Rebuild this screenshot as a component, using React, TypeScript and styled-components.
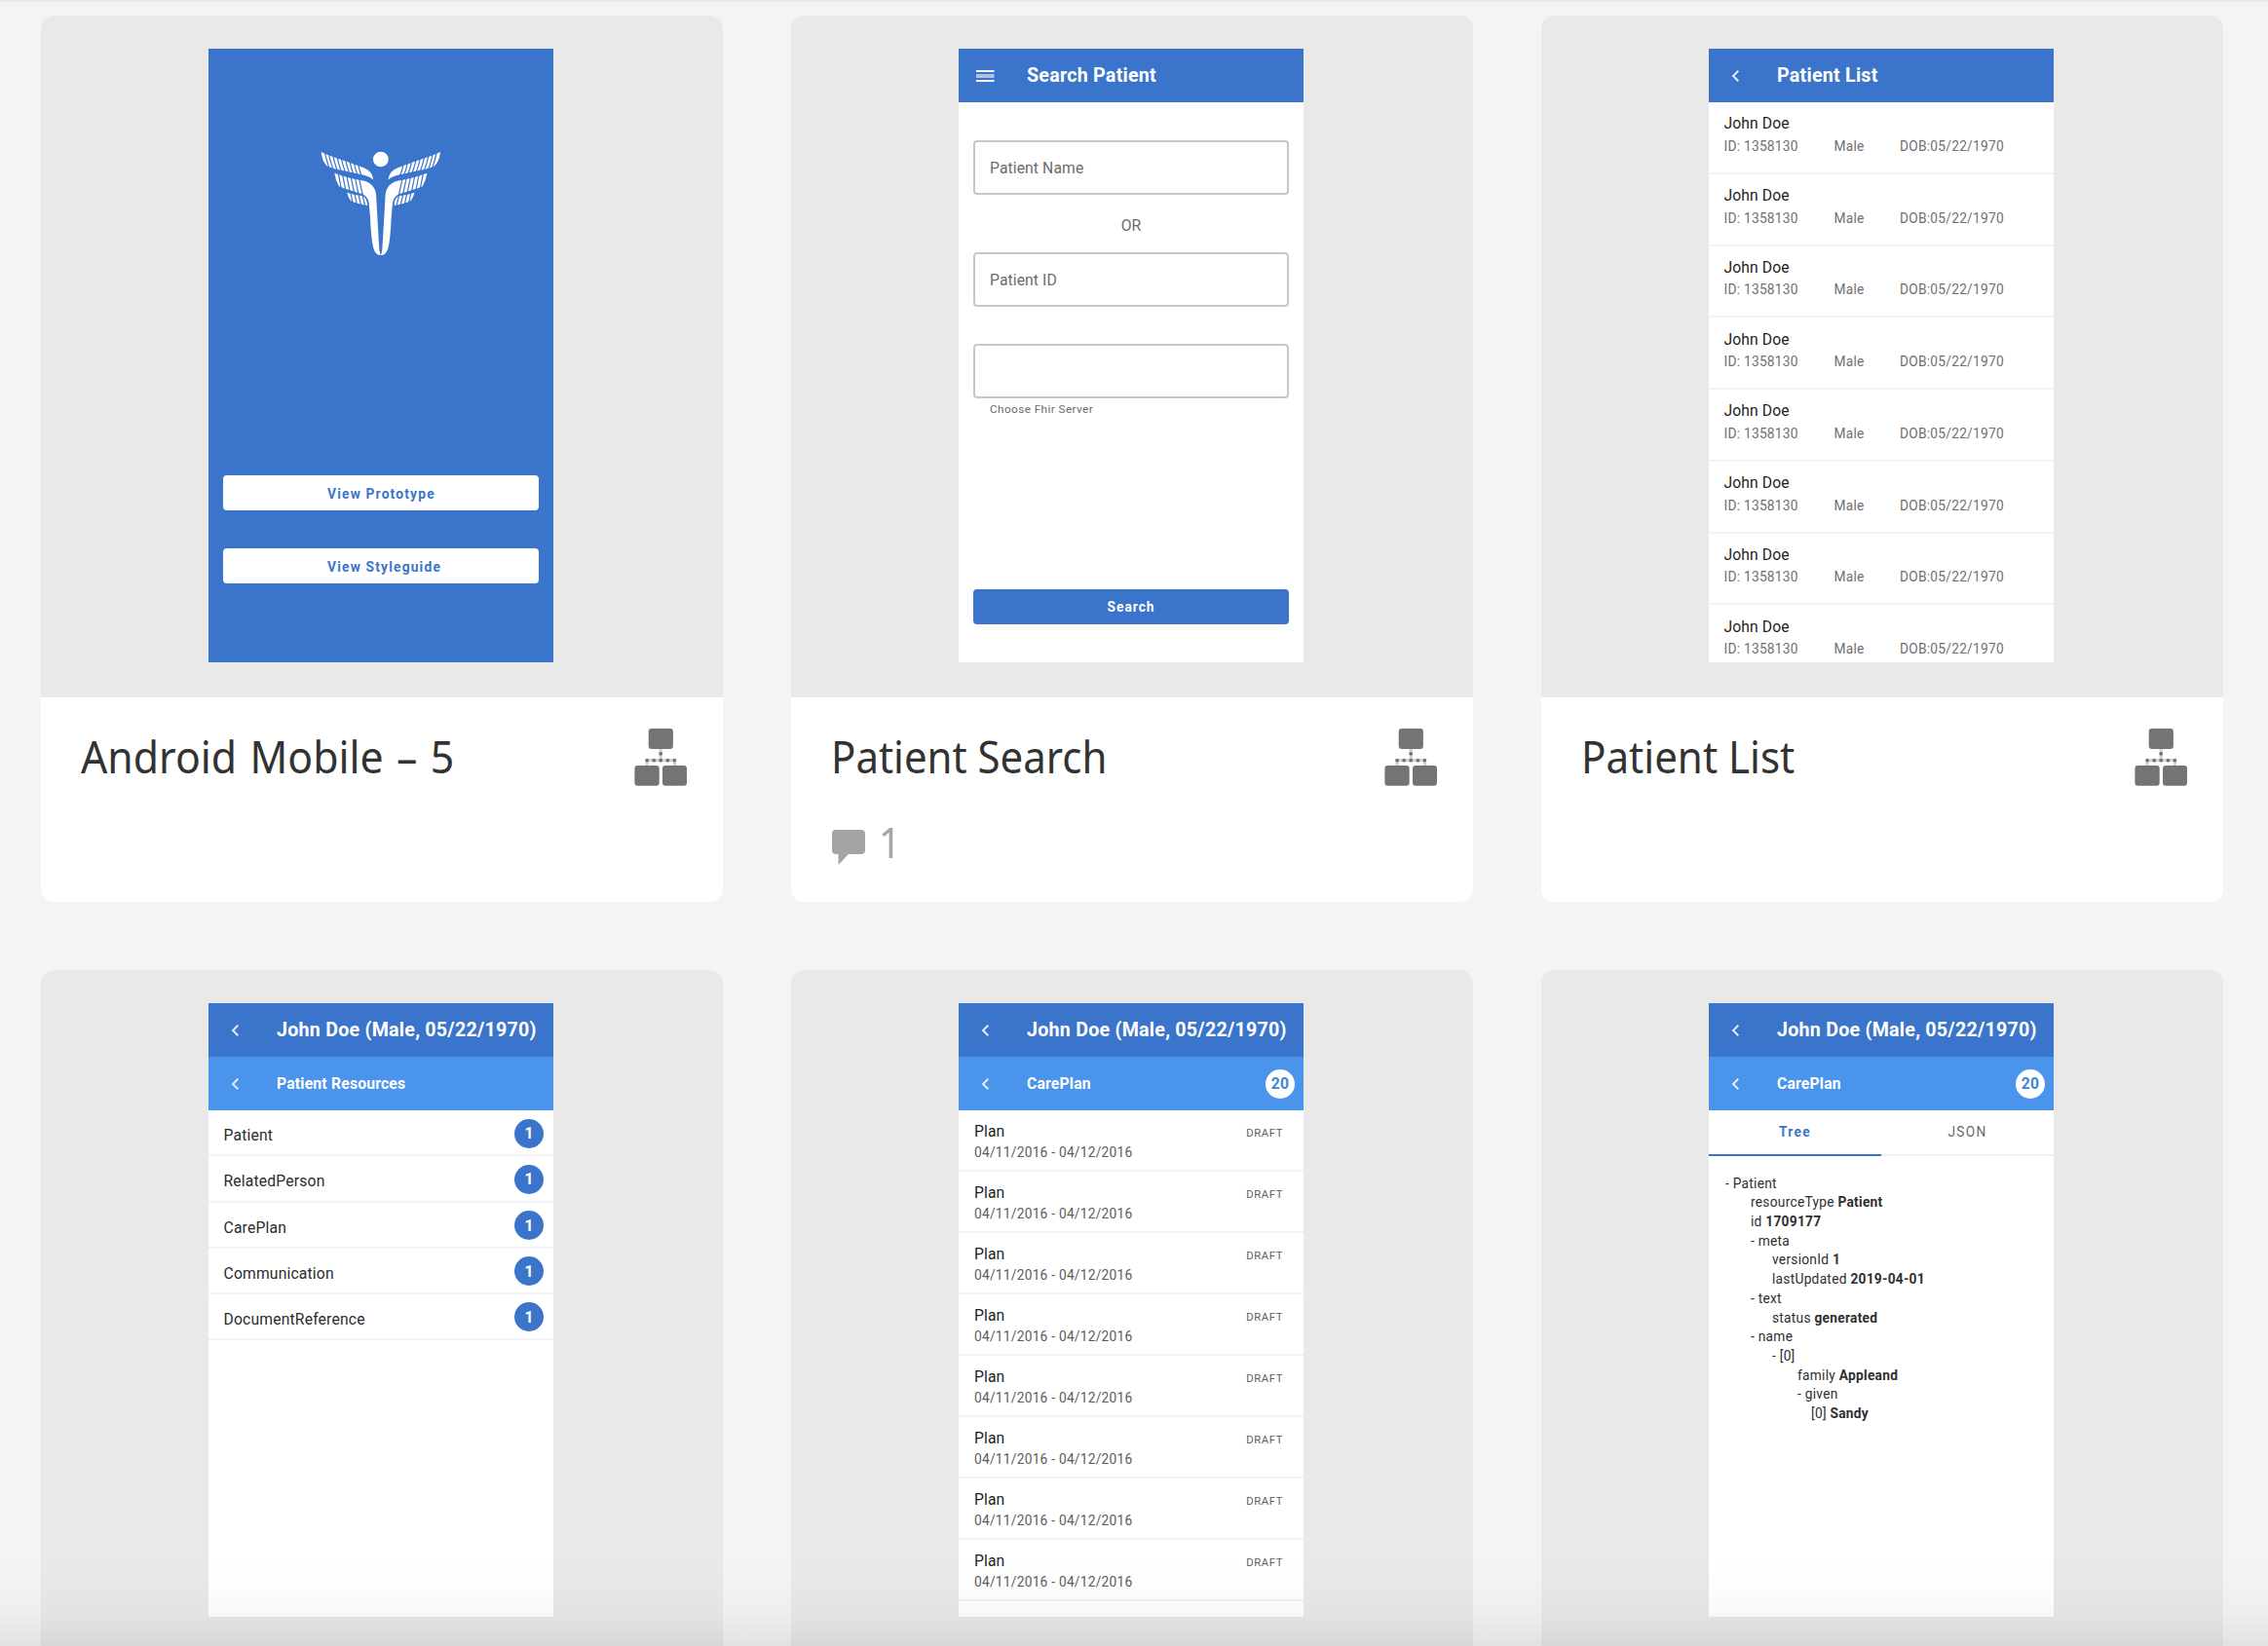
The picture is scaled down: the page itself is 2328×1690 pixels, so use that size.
import React from "react";
import styled, { createGlobalStyle, css } from "styled-components";

const BLUE = "#3a75cb";
const SKY = "#4a95eb";

const GlobalStyle = createGlobalStyle`
  *, *::before, *::after { box-sizing: border-box; }
  html, body { margin: 0; padding: 0; background: #f4f4f4; }
  body { font-family: Roboto, "Liberation Sans", sans-serif; }
`;

const Page = styled.main`
  position: relative;
  width: 2328px;
  height: 1690px;
  overflow: hidden;
  background: #f4f4f4;
  border-top: 2px solid #e8e8e8;
  padding: 14px 0 0 42px;
`;

const BottomFade = styled.div`
  position: absolute;
  left: 0;
  right: 0;
  bottom: 0;
  height: 100px;
  pointer-events: none;
  background: linear-gradient(
    to bottom,
    rgba(0, 0, 0, 0) 0%,
    rgba(0, 0, 0, 0.008) 35%,
    rgba(0, 0, 0, 0.028) 68%,
    rgba(0, 0, 0, 0.075) 100%
  );
`;

const Grid = styled.div`
  display: grid;
  grid-template-columns: repeat(3, 700px);
  grid-auto-rows: 910px;
  gap: 70px;
`;

const Card = styled.article`
  display: flex;
  flex-direction: column;
  border-radius: 13px;
  overflow: hidden;
  background: #fff;
`;

const Preview = styled.div`
  height: 700px;
  flex: none;
  background: #e9e9e9;
  padding: 34px 0 0 172px;
`;

const Info = styled.footer`
  flex: 1;
  padding: 32px 37px 0 41px;
  font-family: "Noto Sans", "Open Sans", sans-serif;
`;

const InfoTop = styled.div`
  display: flex;
  justify-content: space-between;
  height: 60px;
`;

const Title = styled.h2<{ $squeeze: number; $wordGap?: number }>`
  margin: -2px 0 0;
  font-size: 46px;
  line-height: 60px;
  font-weight: 400;
  color: #323232;
  white-space: nowrap;
  word-spacing: ${(p) => p.$wordGap ?? 0}px;
  transform-origin: left center;
  transform: scaleX(${(p) => p.$squeeze});
`;

const Comments = styled.div`
  display: flex;
  gap: 14px;
  height: 60px;
  margin-top: 27px;
  padding-left: 1px;
  color: #a4a4a4;
  font-size: 44px;
  line-height: 60px;

  svg {
    margin-top: 16px;
  }
`;

const CommentCount = styled.span`
  margin-top: -1px;
  transform-origin: left center;
  transform: scaleX(0.9);
`;

const Phone = styled.div<{ $bg?: string }>`
  width: 354px;
  height: 630px;
  overflow: hidden;
  background: ${(p) => p.$bg ?? "#fff"};
  display: flex;
  flex-direction: column;
`;

const Bar = styled.div<{ $sub?: boolean }>`
  flex: none;
  display: flex;
  align-items: center;
  height: ${(p) => (p.$sub ? "55.2px" : "55.1px")};
  padding: 0 9px 0 23px;
  background: ${(p) => (p.$sub ? SKY : BLUE)};
  color: #fff;
  font-weight: 700;
  font-size: ${(p) => (p.$sub ? "15.7px" : "19.66px")};
  letter-spacing: ${(p) => (p.$sub ? "0.2px" : "0.24px")};
  white-space: nowrap;
`;

const BarIcon = styled.span<{ $menu?: boolean }>`
  flex: none;
  display: flex;
  width: ${(p) => (p.$menu ? "52px" : "47px")};
  margin-left: ${(p) => (p.$menu ? "-5px" : "0")};
`;

const BarText = styled.span`
  flex: 1;
  line-height: 24px;
`;

const Badge = styled.span<{ $inverse?: boolean }>`
  flex: none;
  width: 30px;
  height: 30px;
  border-radius: 50%;
  display: flex;
  align-items: center;
  justify-content: center;
  font-size: 15.7px;
  font-weight: 700;
  background: ${(p) => (p.$inverse ? "#fff" : BLUE)};
  color: ${(p) => (p.$inverse ? "#3f84db" : "#fff")};
`;

const Splash = styled.div`
  display: flex;
  flex-direction: column;
  padding: 90px 15px 0;
`;

const LogoBox = styled.div`
  height: 348px;
  padding-left: 81px;
`;

const SplashButton = styled.div`
  height: 36px;
  margin-bottom: 39px;
  padding-left: 107px;
  border-radius: 4px;
  background: #fff;
  color: ${BLUE};
  font-size: 13.76px;
  font-weight: 700;
  line-height: 38px;
  letter-spacing: 1.2px;
`;

const Form = styled.div`
  display: flex;
  flex-direction: column;
  padding: 39px 15px 0;
  color: #6c6c6c;
`;

const Field = styled.div`
  height: 56px;
  border: 2px solid #c8c8c8;
  border-radius: 4px;
  padding-left: 15px;
  font-size: 15.7px;
  letter-spacing: 0.1px;
  line-height: 54px;
`;

const Or = styled.div`
  height: 58.5px;
  line-height: 63px;
  text-align: center;
  font-size: 15.7px;
`;

const FieldGap = styled.div`
  height: 38.5px;
`;

const Hint = styled.div`
  height: 196px;
  padding: 4px 0 0 17px;
  font-size: 11.8px;
  line-height: 14px;
  letter-spacing: 0.4px;
`;

const PrimaryButton = styled.div`
  height: 36px;
  border-radius: 4px;
  background: ${BLUE};
  color: #fff;
  font-size: 13.76px;
  font-weight: 700;
  line-height: 37px;
  letter-spacing: 1px;
  text-align: center;
`;

const divider = css`
  border-bottom: 2px solid #f3f3f3;
`;

const PatientRow = styled.div`
  ${divider}
  flex: none;
  height: 73.75px;
  padding: 12.4px 16px 0 15.5px;
`;

const Name = styled.div`
  font-size: 15.7px;
  line-height: 20px;
  letter-spacing: 0.1px;
  color: #1e1e1e;
`;

const Meta = styled.div`
  display: grid;
  grid-template-columns: 113px 67.5px auto;
  margin-top: 3.4px;
  font-size: 13.76px;
  line-height: 19px;
  letter-spacing: 0.24px;
  color: #707070;
`;

const ResourceRow = styled.div`
  ${divider}
  flex: none;
  display: flex;
  align-items: center;
  justify-content: space-between;
  height: 47.2px;
  padding: 1.6px 10px 0 15.5px;
  font-size: 15.7px;
  letter-spacing: 0.17px;
  color: #2c2c2c;
`;

const ResourceName = styled.span`
  padding-top: 4px;
`;

const PlanRow = styled.div`
  ${divider}
  flex: none;
  display: grid;
  grid-template-columns: 1fr auto;
  align-content: start;
  align-items: baseline;
  height: 62.93px;
  padding: 12px 21px 0 16px;
`;

const PlanDates = styled.div`
  margin-top: 2px;
  font-size: 13.76px;
  line-height: 19px;
  letter-spacing: 0.24px;
  color: #5c5c5c;
`;

const Status = styled.div`
  font-size: 11.3px;
  letter-spacing: 0.6px;
  color: #606060;
`;

const Tabs = styled.div`
  flex: none;
  display: grid;
  grid-template-columns: 1fr 1fr;
  height: 47.2px;
`;

const Tab = styled.div<{ $active?: boolean }>`
  border-bottom: 2px solid ${(p) => (p.$active ? BLUE : "#f1f1f1")};
  color: ${(p) => (p.$active ? BLUE : "#6a6a6a")};
  font-size: 13.76px;
  font-weight: ${(p) => (p.$active ? 700 : 400)};
  letter-spacing: 1.3px;
  line-height: 45px;
  text-align: center;
`;

const Tree = styled.div`
  padding: 18.2px 0 0 17px;
`;

const TreeLine = styled.div<{ $indent: number }>`
  padding-left: ${(p) => p.$indent}px;
  font-size: 13.76px;
  line-height: 19.7px;
  letter-spacing: 0.26px;
  color: #2f2f2f;
  white-space: pre;
`;

const Chevron = () => (
  <svg width="9" height="14" viewBox="0 0 9 14" fill="none">
    <path d="M7.3 1.8 2 7l5.3 5.2" stroke="#e4edf9" strokeWidth="1.9" />
  </svg>
);

const Menu = () => (
  <svg width="19" height="14" viewBox="0 0 19 14">
    <rect y="1" width="18.5" height="2" fill="#fff" />
    <rect y="5" width="18.5" height="4" fill="#a9c4ea" />
    <rect y="11" width="18.5" height="2" fill="#fff" />
  </svg>
);

const FlowIcon = () => (
  <svg width="54" height="60" viewBox="0 0 54 60" fill="#747474">
    <rect x="14.7" y="0" width="25.2" height="21" rx="3" />
    <rect x="0.4" y="38" width="25.3" height="20.7" rx="3" />
    <rect x="29" y="38" width="25" height="20.7" rx="3" />
    <g fill="#d3d3d3">
      <rect x="25.6" y="21" width="3.2" height="11" />
      <rect x="13" y="31.2" width="28.4" height="3" />
      <rect x="11.6" y="33" width="3" height="5" />
      <rect x="40" y="33" width="3" height="5" />
    </g>
    <circle cx="27.2" cy="25.8" r="1.9" />
    {[13.1, 20.2, 27.2, 34.4, 41.4].map((x) => (
      <circle key={x} cx={x} cy="32.7" r="1.9" />
    ))}
  </svg>
);

const CommentIcon = () => (
  <svg width="34" height="38" viewBox="0 0 34 38" fill="#a4a4a4">
    <path d="M4 1h26a4 4 0 0 1 4 4v17a4 4 0 0 1-4 4H17L6.5 37V26H4a4 4 0 0 1-4-4V5a4 4 0 0 1 4-4Z" />
  </svg>
);

const Wing = () => (
  <g>
    <path
      fill="#fff"
      d="M59 48C90 64 150 80 190 97Q216 106 220 134Q207 122 180 117C150 110 105 102 78 92Q62 78 59 48Z"
    />
    <path
      fill="#fff"
      d="M100 113C130 125 165 132 195 138Q224 148 228 178L238 350Q240 358 242 366Q226 366 220 344Q213 320 210 250L206 205Q203 184 184 177C160 170 135 163 114 154Q103 135 100 113Z"
    />
    <path fill="#fff" d="M139 173Q165 182 188 184Q201 193 201 213Q175 209 153 200Q142 190 139 173Z" />
    <g stroke={BLUE} strokeWidth="3.6" fill="none">
      {[72, 84, 97, 110, 123, 136, 149, 162, 175].map((x, i) => (
        <path key={x} d={`M${x - 2} ${46 + i * 5}Q${x + 1} ${66 + i * 5} ${x + 12} ${98 + i * 4}`} />
      ))}
      {[113, 126, 139, 152, 165, 178].map((x, i) => (
        <path key={x} d={`M${x - 2} ${110 + i * 4}L${x + 9} ${166 + i * 3}`} />
      ))}
      {[151, 163, 175, 187].map((x, i) => (
        <path key={x} d={`M${x - 2} ${170 + i * 2}L${x + 7} ${214}`} />
      ))}
    </g>
  </g>
);

const Logo = () => (
  <svg width="160" height="140" viewBox="0 0 480 420">
    <Wing />
    <g transform="translate(485 0) scale(-1 1)">
      <Wing />
    </g>
    <circle cx="242.5" cy="70.5" r="23.5" fill="#fff" />
  </svg>
);

const Header = ({ text, menu }: { text: string; menu?: boolean }) => (
  <Bar>
    <BarIcon $menu={menu}>{menu ? <Menu /> : <Chevron />}</BarIcon>
    <BarText>{text}</BarText>
  </Bar>
);

const SubHeader = ({ text, count }: { text: string; count?: number }) => (
  <Bar $sub>
    <BarIcon>
      <Chevron />
    </BarIcon>
    <BarText>{text}</BarText>
    {count !== undefined && <Badge $inverse>{count}</Badge>}
  </Bar>
);

const SplashScreen = () => (
  <Phone $bg={BLUE}>
    <Splash>
      <LogoBox>
        <Logo />
      </LogoBox>
      <SplashButton>View Prototype</SplashButton>
      <SplashButton>View Styleguide</SplashButton>
    </Splash>
  </Phone>
);

const SearchScreen = () => (
  <Phone>
    <Header menu text="Search Patient" />
    <Form>
      <Field>Patient Name</Field>
      <Or>OR</Or>
      <Field>Patient ID</Field>
      <FieldGap />
      <Field />
      <Hint>Choose Fhir Server</Hint>
      <PrimaryButton>Search</PrimaryButton>
    </Form>
  </Phone>
);

const PatientListScreen = () => (
  <Phone>
    <Header text="Patient List" />
    {Array.from({ length: 8 }, (_, i) => (
      <PatientRow key={i}>
        <Name>John Doe</Name>
        <Meta>
          <span>ID: 1358130</span>
          <span>Male</span>
          <span>DOB:05/22/1970</span>
        </Meta>
      </PatientRow>
    ))}
  </Phone>
);

const PATIENT = "John Doe (Male, 05/22/1970)";

const ResourcesScreen = () => (
  <Phone>
    <Header text={PATIENT} />
    <SubHeader text="Patient Resources" />
    {["Patient", "RelatedPerson", "CarePlan", "Communication", "DocumentReference"].map((r) => (
      <ResourceRow key={r}>
        <ResourceName>{r}</ResourceName>
        <Badge>1</Badge>
      </ResourceRow>
    ))}
  </Phone>
);

const PlansScreen = () => (
  <Phone>
    <Header text={PATIENT} />
    <SubHeader text="CarePlan" count={20} />
    {Array.from({ length: 8 }, (_, i) => (
      <PlanRow key={i}>
        <Name>Plan</Name>
        <Status>DRAFT</Status>
        <PlanDates>04/11/2016 - 04/12/2016</PlanDates>
      </PlanRow>
    ))}
  </Phone>
);

const TREE: [number, string, string?][] = [
  [0, "- Patient"],
  [26, "resourceType ", "Patient"],
  [26, "id ", "1709177"],
  [26, "- meta"],
  [48, "versionId ", "1"],
  [48, "lastUpdated ", "2019-04-01"],
  [26, "- text"],
  [48, "status ", "generated"],
  [26, "- name"],
  [48, "- [0]"],
  [74, "family ", "Appleand"],
  [74, "- given"],
  [88, "[0] ", "Sandy"],
];

const TreeScreen = () => (
  <Phone>
    <Header text={PATIENT} />
    <SubHeader text="CarePlan" count={20} />
    <Tabs>
      <Tab $active>Tree</Tab>
      <Tab>JSON</Tab>
    </Tabs>
    <Tree>
      {TREE.map(([indent, label, value], i) => (
        <TreeLine key={i} $indent={indent}>
          {label}
          {value && <b>{value}</b>}
        </TreeLine>
      ))}
    </Tree>
  </Phone>
);

interface Artboard {
  title: string;
  screen: React.ReactNode;
  squeeze: number;
  wordGap?: number;
  comments?: number;
}

const ARTBOARDS: Artboard[] = [
  { title: "Android Mobile – 5", screen: <SplashScreen />, squeeze: 0.93, wordGap: 2.4 },
  { title: "Patient Search", screen: <SearchScreen />, squeeze: 0.912, comments: 1 },
  { title: "Patient List", screen: <PatientListScreen />, squeeze: 0.915 },
];

const CLIPPED = [<ResourcesScreen />, <PlansScreen />, <TreeScreen />];

export default function App() {
  return (
    <Page>
      <GlobalStyle />
      <Grid>
        {ARTBOARDS.map((a) => (
          <Card key={a.title}>
            <Preview>{a.screen}</Preview>
            <Info>
              <InfoTop>
                <Title $squeeze={a.squeeze} $wordGap={a.wordGap}>
                  {a.title}
                </Title>
                <FlowIcon />
              </InfoTop>
              {a.comments && (
                <Comments>
                  <CommentIcon />
                  <CommentCount>{a.comments}</CommentCount>
                </Comments>
              )}
            </Info>
          </Card>
        ))}
        {CLIPPED.map((screen, i) => (
          <Card key={i}>
            <Preview>{screen}</Preview>
          </Card>
        ))}
      </Grid>
      <BottomFade />
    </Page>
  );
}
